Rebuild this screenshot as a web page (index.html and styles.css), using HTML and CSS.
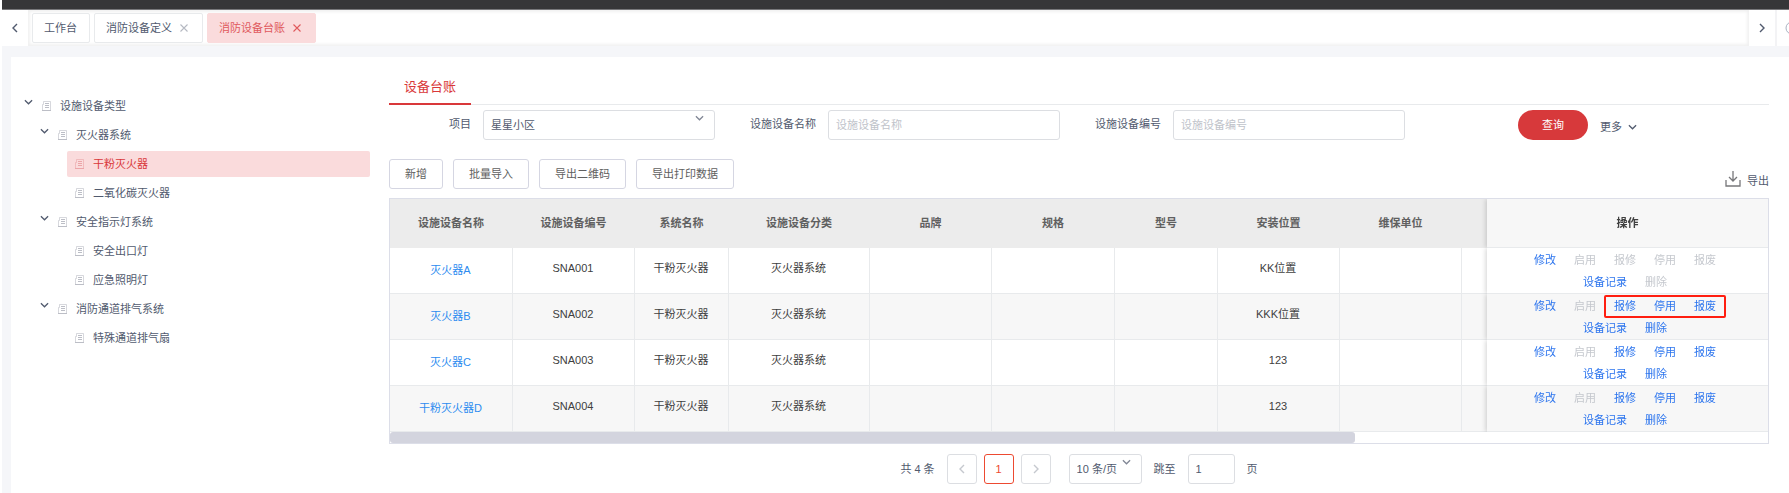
FILE: index.html
```html
<!DOCTYPE html>
<html lang="zh-CN">
<head>
    <meta charset="UTF-8">
    <meta name="viewport" content="width=device-width, initial-scale=1.0">
    <title>消防设备台账</title>
    <link rel="stylesheet" href="styles.css">
</head>
<body>
    <!-- shared icons -->
    <svg class="sprite" aria-hidden="true">
        <symbol id="i-down" viewBox="0 0 10 6"><path d="M1 1l4 4 4-4" fill="none" stroke="currentColor" stroke-width="1.4"/></symbol>
        <symbol id="i-left" viewBox="0 0 6 10"><path d="M5 1L1 5l4 4" fill="none" stroke="currentColor" stroke-width="1.4"/></symbol>
        <symbol id="i-right" viewBox="0 0 6 10"><path d="M1 1l4 4-4 4" fill="none" stroke="currentColor" stroke-width="1.4"/></symbol>
        <symbol id="i-close" viewBox="0 0 8 8"><path d="M.5 .5l7 7M7.5 .5l-7 7" fill="none" stroke="currentColor" stroke-width="1.1"/></symbol>
        <symbol id="i-doc" viewBox="0 0 9 10"><path d="M1.500 0.500h7v9h-8v-6h1z" fill="none" stroke="currentColor" stroke-opacity=".6"/><path d="M3 2.500h4M3 4.500h4M3 6.500h4M0 9.500h9" fill="none" stroke="currentColor"/></symbol>
    </svg>

    <header class="topbar"></header>

    <nav class="tabs">
        <button class="tabs-arrow" aria-label="向左"><svg class="icon-side"><use href="#i-left"/></svg></button>
        <div class="tabs-list">
            <a class="tab" href="#">工作台</a>
            <a class="tab closable" href="#">消防设备定义<svg class="icon-close"><use href="#i-close"/></svg></a>
            <a class="tab closable active" href="#">消防设备台账<svg class="icon-close"><use href="#i-close"/></svg></a>
        </div>
        <button class="tabs-arrow" aria-label="向右"><svg class="icon-side"><use href="#i-right"/></svg></button>
        <button class="tabs-menu" aria-label="关闭操作"><svg viewBox="0 0 14 14"><circle cx="7" cy="7" r="6" fill="none" stroke="#a9b2c2"/></svg></button>
    </nav>

    <main class="card">
        <aside class="tree">
            <ul>
                <li>
                    <div class="node"><svg class="icon-down"><use href="#i-down"/></svg><svg class="icon-doc"><use href="#i-doc"/></svg>设施设备类型</div>
                    <ul>
                        <li>
                            <div class="node"><svg class="icon-down"><use href="#i-down"/></svg><svg class="icon-doc"><use href="#i-doc"/></svg>灭火器系统</div>
                            <ul>
                                <li><div class="node leaf selected"><svg class="icon-doc"><use href="#i-doc"/></svg>干粉灭火器</div></li>
                                <li><div class="node leaf"><svg class="icon-doc"><use href="#i-doc"/></svg>二氧化碳灭火器</div></li>
                            </ul>
                        </li>
                        <li>
                            <div class="node"><svg class="icon-down"><use href="#i-down"/></svg><svg class="icon-doc"><use href="#i-doc"/></svg>安全指示灯系统</div>
                            <ul>
                                <li><div class="node leaf"><svg class="icon-doc"><use href="#i-doc"/></svg>安全出口灯</div></li>
                                <li><div class="node leaf"><svg class="icon-doc"><use href="#i-doc"/></svg>应急照明灯</div></li>
                            </ul>
                        </li>
                        <li>
                            <div class="node"><svg class="icon-down"><use href="#i-down"/></svg><svg class="icon-doc"><use href="#i-doc"/></svg>消防通道排气系统</div>
                            <ul>
                                <li><div class="node leaf"><svg class="icon-doc"><use href="#i-doc"/></svg>特殊通道排气扇</div></li>
                            </ul>
                        </li>
                    </ul>
                </li>
            </ul>
        </aside>

        <section class="content">
            <div class="subtabs"><a class="subtab" href="#">设备台账</a></div>

            <form class="search">
                <div class="field">
                    <label for="project">项目</label>
                    <div class="select">
                        <select id="project"><option>星星小区</option></select>
                        <svg class="icon-down"><use href="#i-down"/></svg>
                    </div>
                </div>
                <div class="field">
                    <label for="dev-name">设施设备名称</label>
                    <input id="dev-name" type="text" placeholder="设施设备名称">
                </div>
                <div class="field">
                    <label for="dev-code">设施设备编号</label>
                    <input id="dev-code" type="text" placeholder="设施设备编号">
                </div>
                <div class="search-actions">
                    <button class="btn-primary" type="button">查询</button>
                    <a class="more" href="#">更多<svg class="icon-down"><use href="#i-down"/></svg></a>
                </div>
            </form>

            <div class="toolbar">
                <button class="btn">新增</button>
                <button class="btn">批量导入</button>
                <button class="btn">导出二维码</button>
                <button class="btn">导出打印数据</button>
                <a class="export" href="#"><svg viewBox="0 0 16 16"><path d="M1 9v6h14V9M8 0v10M4 6l4 4 4-4" fill="none" stroke="currentColor" stroke-width="1.3"/></svg>导出</a>
            </div>

            <div class="table-box">
                <div class="table-scroll">
                    <table>
                        <colgroup>
                            <col class="w-123"><col class="w-122"><col class="w-94"><col class="w-141"><col class="w-122"><col class="w-123"><col class="w-103"><col class="w-122"><col class="w-122"><col><col class="w-ops">
                        </colgroup>
                        <thead>
                            <tr>
                                <th>设施设备名称</th><th>设施设备编号</th><th>系统名称</th><th>设施设备分类</th><th>品牌</th><th>规格</th><th>型号</th><th>安装位置</th><th>维保单位</th><th></th><th class="ops">操作</th>
                            </tr>
                        </thead>
                        <tbody>
                            <tr>
                                <td class="name"><a href="#">灭火器A</a></td><td>SNA001</td><td>干粉灭火器</td><td>灭火器系统</td><td></td><td></td><td></td><td>KK位置</td><td></td><td></td>
                                <td class="ops">
                                    <div class="ops-row"><button>修改</button><button disabled>启用</button><button disabled>报修</button><button disabled>停用</button><button disabled>报废</button></div>
                                    <div class="ops-row"><button>设备记录</button><button disabled>删除</button></div>
                                </td>
                            </tr>
                            <tr>
                                <td class="name"><a href="#">灭火器B</a></td><td>SNA002</td><td>干粉灭火器</td><td>灭火器系统</td><td></td><td></td><td></td><td>KKK位置</td><td></td><td></td>
                                <td class="ops">
                                    <div class="ops-row"><button>修改</button><button disabled>启用</button><span class="marked"><button>报修</button><button>停用</button><button>报废</button></span></div>
                                    <div class="ops-row"><button>设备记录</button><button>删除</button></div>
                                </td>
                            </tr>
                            <tr>
                                <td class="name"><a href="#">灭火器C</a></td><td>SNA003</td><td>干粉灭火器</td><td>灭火器系统</td><td></td><td></td><td></td><td>123</td><td></td><td></td>
                                <td class="ops">
                                    <div class="ops-row"><button>修改</button><button disabled>启用</button><button>报修</button><button>停用</button><button>报废</button></div>
                                    <div class="ops-row"><button>设备记录</button><button>删除</button></div>
                                </td>
                            </tr>
                            <tr>
                                <td class="name"><a href="#">干粉灭火器D</a></td><td>SNA004</td><td>干粉灭火器</td><td>灭火器系统</td><td></td><td></td><td></td><td>123</td><td></td><td></td>
                                <td class="ops">
                                    <div class="ops-row"><button>修改</button><button disabled>启用</button><button>报修</button><button>停用</button><button>报废</button></div>
                                    <div class="ops-row"><button>设备记录</button><button>删除</button></div>
                                </td>
                            </tr>
                        </tbody>
                    </table>
                </div>
                <div class="scrollbar"><div class="scrollbar-thumb"></div></div>
            </div>

            <div class="pager">
                <span class="pager-total">共 4 条</span>
                <div class="pager-pages">
                    <button disabled aria-label="上一页"><svg class="icon-side"><use href="#i-left"/></svg></button>
                    <button class="current">1</button>
                    <button disabled aria-label="下一页"><svg class="icon-side"><use href="#i-right"/></svg></button>
                </div>
                <div class="select page-size">
                    <select aria-label="每页条数"><option>10 条/页</option></select>
                    <svg class="icon-down"><use href="#i-down"/></svg>
                </div>
                <label for="jump">跳至</label>
                <input id="jump" type="text" value="1">
                <span>页</span>
            </div>
        </section>
    </main>
</body>
</html>
```
FILE: styles.css
```css
* {
    box-sizing: border-box;
}

body {
    margin: 0;
    padding-left: 2px;
    min-height: 100vh;
    display: flex;
    flex-direction: column;
    font-family: "Liberation Sans", "Noto Sans CJK SC", sans-serif;
    font-size: 11px;
    line-height: 16px;
    color: #515a6e;
    background: linear-gradient(to right, #fff 2px, #f5f6f9 2px);
    overflow-x: hidden;
}

a {
    color: inherit;
    text-decoration: none;
}

button, input, select {
    font: inherit;
    color: inherit;
    margin: 0;
}

button {
    padding: 0;
    border: none;
    background: none;
    cursor: pointer;
}

ul {
    list-style: none;
    margin: 0;
    padding: 0;
}

svg {
    display: block;
    flex: none;
}

.sprite {
    position: absolute;
    width: 0;
    height: 0;
}

.icon-down {
    width: 9px;
    height: 6px;
}

.icon-side {
    width: 6px;
    height: 10px;
}

.icon-close {
    width: 8px;
    height: 8px;
}

.icon-doc {
    width: 9px;
    height: 10px;
    color: #bcbec6;
}

/* top bar and page tabs */
.topbar {
    height: 10px;
    background: #363638;
    border-bottom: 1px solid #77777a;
}

.tabs {
    display: flex;
    height: 36px;
    background: #fff;
}

.tabs-arrow {
    width: 26px;
    display: flex;
    align-items: center;
    justify-content: center;
}

.tabs-list {
    flex: 1;
    display: flex;
    gap: 4px;
    padding: 3px 4px;
    box-shadow: inset 0 0 3px 2px #f1f1f1;
}

.tab {
    display: flex;
    align-items: center;
    gap: 8px;
    padding: 0 12px 0 11px;
    border: 1px solid #e8eaec;
    border-radius: 2px;
    background: #fff;
}

.tab.closable {
    padding-right: 14px;
}

.tab .icon-close {
    color: #b5b9c2;
}

.tab.active {
    color: #e0595c;
    background: #fadbdc;
    border-color: #fadbdc;
}

.tab.active .icon-close {
    color: #e0595c;
}

.tabs-menu {
    width: 14px;
    padding-left: 8px;
    border-left: 2px solid #f3f3f5;
    overflow: hidden;
}

.tabs-menu svg {
    width: 14px;
    height: 14px;
}

/* card */
.card {
    flex: 1;
    display: flex;
    gap: 19px;
    margin: 11px 0 0 9px;
    padding: 15px 20px 9px 13px;
    background: #fff;
}

.tree {
    width: 346px;
    flex: none;
    padding-top: 21px;
}

.tree ul ul {
    padding-left: 16px;
}

.node {
    display: flex;
    align-items: center;
    gap: 9px;
    height: 26px;
    margin-bottom: 3px;
    border-radius: 2px;
}

.node .icon-down {
    margin-bottom: 8px;
}

.leaf {
    margin-left: 11px;
    padding-left: 8px;
}

.leaf.selected {
    color: #d9383a;
    background: #fadbdc;
}

.leaf.selected .icon-doc {
    color: #eba5a8;
}

.content {
    flex: 1;
    min-width: 0;
}

.subtabs {
    display: flex;
    border-bottom: 1px solid #e8eaec;
}

.subtab {
    padding: 6px 15px 8px;
    margin-bottom: -1px;
    font-size: 13px;
    line-height: 17px;
    color: #d9383a;
    border-bottom: 2px solid #d9383a;
}

/* search form */
.search {
    display: grid;
    grid-template-columns: repeat(4, 1fr);
    margin-top: 5px;
}

.field {
    display: flex;
    padding-right: 19px;
}

.field label {
    width: 94px;
    padding: 6px 12px 0 0;
    text-align: right;
}

.field input, .field .select {
    flex: 1;
    min-width: 0;
}

input, select {
    height: 30px;
    padding: 0 7px;
    border: 1px solid #dcdee2;
    border-radius: 3px;
    background: #fff;
    outline: none;
}

input::placeholder {
    color: #c0c3ca;
}

.select {
    position: relative;
}

.select select {
    width: 100%;
    appearance: none;
}

.select .icon-down {
    position: absolute;
    top: 5px;
    right: 11px;
    color: #808695;
}

.search-actions {
    display: flex;
    align-items: center;
    gap: 12px;
    padding-left: 94px;
}

.btn-primary {
    width: 70px;
    height: 30px;
    border-radius: 15px;
    color: #fff;
    background: #d7393b;
}

.more {
    display: flex;
    align-items: center;
    gap: 6px;
    padding-top: 3px;
}

/* toolbar */
.toolbar {
    display: flex;
    gap: 10px;
    margin: 19px 0 9px;
}

.btn {
    height: 30px;
    padding: 0 15px;
    border: 1px solid #d5d6e2;
    border-radius: 3px;
    color: #606060;
    background: #fff;
}

.export {
    display: flex;
    align-items: flex-end;
    gap: 6px;
    margin-left: auto;
}

.export svg {
    width: 16px;
    height: 16px;
    margin-bottom: 2px;
    color: #77777a;
}

/* table */
.table-box {
    border: 1px solid #dcdee8;
}

.table-scroll {
    overflow-x: auto;
    scrollbar-width: none;
}

table {
    width: 142%;
    table-layout: fixed;
    border-spacing: 0;
}

.w-94 {
    width: 94px;
}

.w-103 {
    width: 103px;
}

.w-122 {
    width: 122px;
}

.w-123 {
    width: 123px;
}

.w-141 {
    width: 141px;
}

.w-ops {
    width: 281px;
}

th {
    height: 49px;
    padding: 0 1px 1px 0;
    color: #606060;
    background: #ececec;
}

td {
    height: 46px;
    padding: 0 1px 6px 0;
    text-align: center;
    color: #404040;
    background: #fff;
    border-right: 1px solid #e8eaec;
    border-bottom: 1px solid #e8eaec;
}

tbody tr:nth-child(even) td {
    background: #f7f7f7;
}

td.name {
    padding: 0 1px 1px 0;
    color: #2d8cf0;
}

.ops {
    position: sticky;
    right: 0;
    padding: 0;
    border-right: none;
    box-shadow: -1px 0 5px rgba(0, 0, 0, 0.18);
    clip-path: inset(0 0 0 -8px);
}

th.ops {
    color: #404040;
    background: #f7f7f7;
    border-bottom: 1px solid #e8eaec;
}

.ops-row {
    display: flex;
    justify-content: center;
    gap: 18px;
    padding-right: 5px;
}

.ops-row button {
    line-height: 22px;
    color: #2d75ee;
}

.ops-row button:disabled {
    color: #c5c8ce;
}

.marked {
    position: relative;
    display: flex;
    gap: 18px;
}

.marked::after {
    content: "";
    position: absolute;
    inset: 0 -10px -1px;
    border: 2px solid #ff1e10;
    border-radius: 2px;
    pointer-events: none;
}

.scrollbar {
    height: 11px;
}

.scrollbar-thumb {
    width: 70%;
    height: 11px;
    border-radius: 3px;
    background: #d3d4de;
}

/* pagination */
.pager {
    display: flex;
    justify-content: center;
    align-items: center;
    gap: 12px;
    margin-top: 10px;
}

.pager-pages {
    display: flex;
    gap: 7px;
    margin-right: 6px;
}

.pager-pages button {
    display: flex;
    align-items: center;
    justify-content: center;
    width: 30px;
    height: 30px;
    border: 1px solid #dcdee2;
    border-radius: 3px;
    background: #fff;
}

.pager-pages button:disabled {
    color: #c5c8ce;
}

.pager-pages .current {
    color: #ed4a31;
    border-color: #ed4a31;
}

.page-size {
    width: 73px;
}

.pager input {
    width: 47px;
}
```
